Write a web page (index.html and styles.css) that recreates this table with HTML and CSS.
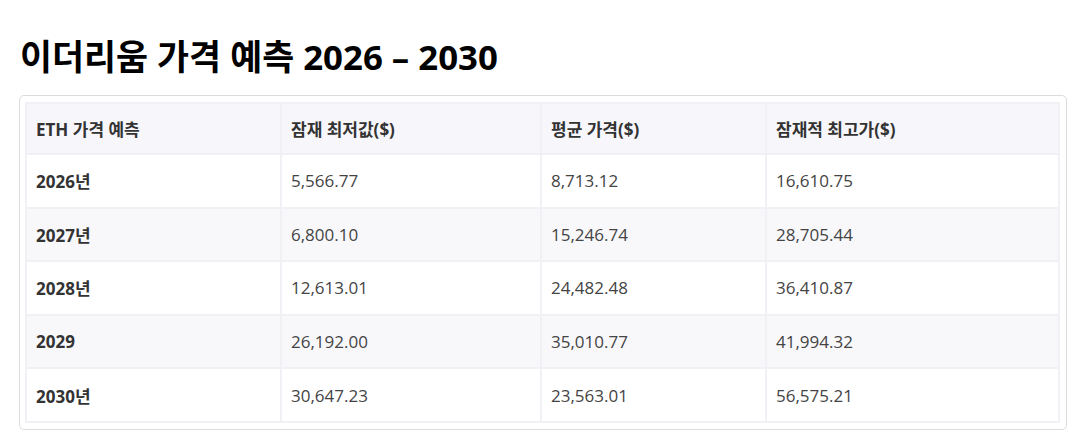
FILE: index.html
```html
<!DOCTYPE html>
<html lang="ko">
<head>
<meta charset="utf-8">
<link rel="stylesheet" href="styles.css">
</head>
<body>
<h2 class="title">이더리움 가격 예측 2026 – 2030</h2>
<div class="table-wrap">
<table class="price-table">
<thead>
<tr><th class="c1">ETH 가격 예측</th><th class="c2">잠재 최저값($)</th><th class="c3">평균 가격($)</th><th class="c4">잠재적 최고가($)</th></tr>
</thead>
<tbody>
<tr><td class="year">2026년</td><td>5,566.77</td><td>8,713.12</td><td>16,610.75</td></tr>
<tr><td class="year">2027년</td><td>6,800.10</td><td>15,246.74</td><td>28,705.44</td></tr>
<tr><td class="year">2028년</td><td>12,613.01</td><td>24,482.48</td><td>36,410.87</td></tr>
<tr><td class="year">2029</td><td>26,192.00</td><td>35,010.77</td><td>41,994.32</td></tr>
<tr><td class="year">2030년</td><td>30,647.23</td><td>23,563.01</td><td>56,575.21</td></tr>
</tbody>
</table>
</div>
</body>
</html>
```
FILE: styles.css
```css
html, body {
  margin: 0;
  padding: 0;
  background: #ffffff;
}
body {
  padding: 29px 14px 0 19px;
  font-family: "Open Sans", "Noto Sans CJK KR", sans-serif;
  color: #333333;
}
.title {
  margin: 0 0 11px 1px;
  font-size: 34.8px;
  line-height: 55px;
  font-weight: 700;
  color: #000000;
}
.table-wrap {
  border: 1px solid #dcdcdc;
  border-radius: 5px;
  padding: 6px 6px 6px 5px;
}
.price-table {
  width: 100%;
  border-collapse: collapse;
  font-size: 17px;
}
.price-table th,
.price-table td {
  border: 2px solid #f0f0f5;
  text-align: left;
  padding: 0 10px 0 9px;
  height: 51.6px;
  vertical-align: middle;
}
.price-table th {
  height: 49px;
  background: #f7f7fb;
  font-weight: 700;
  color: #333333;
}
.price-table td {
  color: #444444;
}
.price-table td.year {
  font-weight: 700;
  color: #333333;
}
.price-table tbody tr:nth-child(even) td {
  background: #f8f8fb;
}
.c1 { width: 234px; }
.c2 { width: 239px; }
.c3 { width: 204px; }
```
